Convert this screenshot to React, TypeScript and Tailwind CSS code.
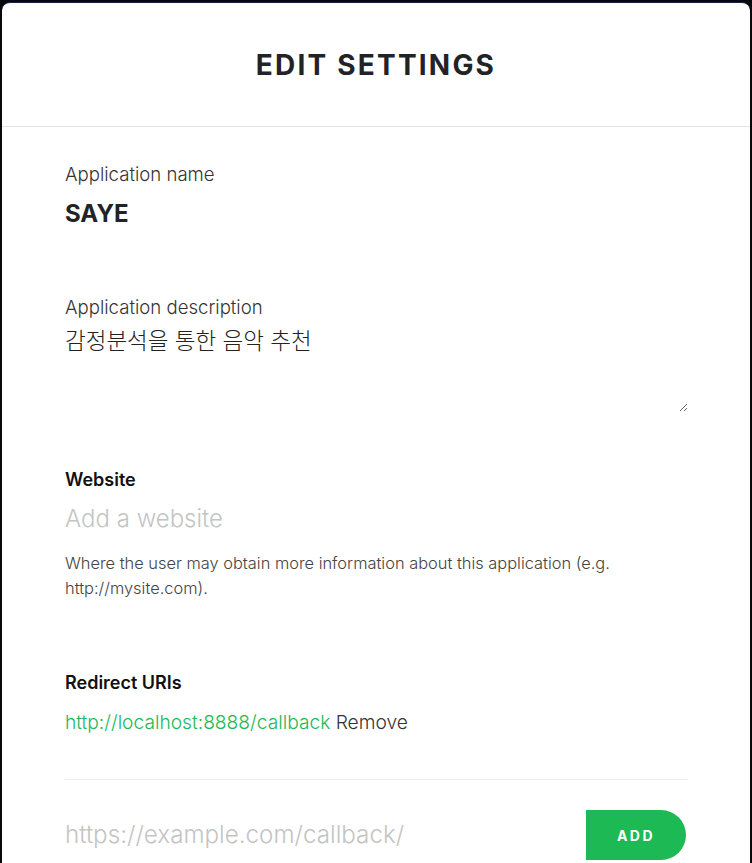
import React from "react";

export default function App() {
  return (
    <div className="w-[752px] h-[863px] overflow-hidden bg-[#06080c] pt-[2px] px-[2px]" style={{ fontFamily: "Inter, 'Noto Sans CJK KR', sans-serif" }}>
      <div className="h-[900px] bg-white rounded-t-[8px] border-t border-[#13243a]">
        <div className="h-[124px] flex items-center justify-center border-b border-[#e5e5e5]">
          <h1 className="text-[28px] font-bold tracking-[2.2px] text-[#222326]">EDIT SETTINGS</h1>
        </div>
        <div className="pl-[63px] pr-[62px] pt-[34px]">
          <div className="text-[18.6px] font-light text-[#333] leading-[26px]">Application name</div>
          <div className="mt-[13px] text-[24px] font-bold text-[#222326] leading-[28px]">SAYE</div>

          <div className="mt-[66px] text-[18.6px] font-light text-[#333] leading-[26px]">Application description</div>
          <textarea
            className="block w-full h-[86px] mt-[6px] text-[22.5px] font-light text-[#222] leading-[30px] outline-none resize-y"
            style={{ fontFamily: "Inter, 'Noto Sans CJK KR', sans-serif" }}
            defaultValue="감정분석을 통한 음악 추천"
          />

          <div className="mt-[55px] text-[18px] font-semibold text-[#111] leading-[26px]">Website</div>
          <input
            className="block w-full mt-[10px] text-[24px] font-light leading-[32px] outline-none placeholder:text-[#c4c4c4]"
            placeholder="Add a website"
          />
          <p className="mt-[16px] text-[16.4px] font-light text-[#444] leading-[25px]">
            Where the user may obtain more information about this application (e.g. http://mysite.com).
          </p>

          <div className="mt-[69px] text-[18px] font-semibold text-[#111] leading-[26px]">Redirect URIs</div>
          <div className="mt-[13px] text-[19.2px] font-light leading-[26px]">
            <span className="text-[#1db954]">http://localhost:8888/callback</span>{" "}
            <span className="text-[#333]">Remove</span>
          </div>

          <div className="mt-[44px] border-t border-[#ececec]" />
          <div className="mt-[30px] flex items-center justify-between">
            <input
              className="flex-1 text-[24.2px] font-light leading-[32px] outline-none placeholder:text-[#c4c4c4]"
              placeholder="https://example.com/callback/"
            />
            <button className="w-[100px] h-[50px] bg-[#1db954] text-white text-[14px] font-bold tracking-[2.5px] rounded-r-full mr-[2px]">
              ADD
            </button>
          </div>
        </div>
      </div>
    </div>
  );
}
